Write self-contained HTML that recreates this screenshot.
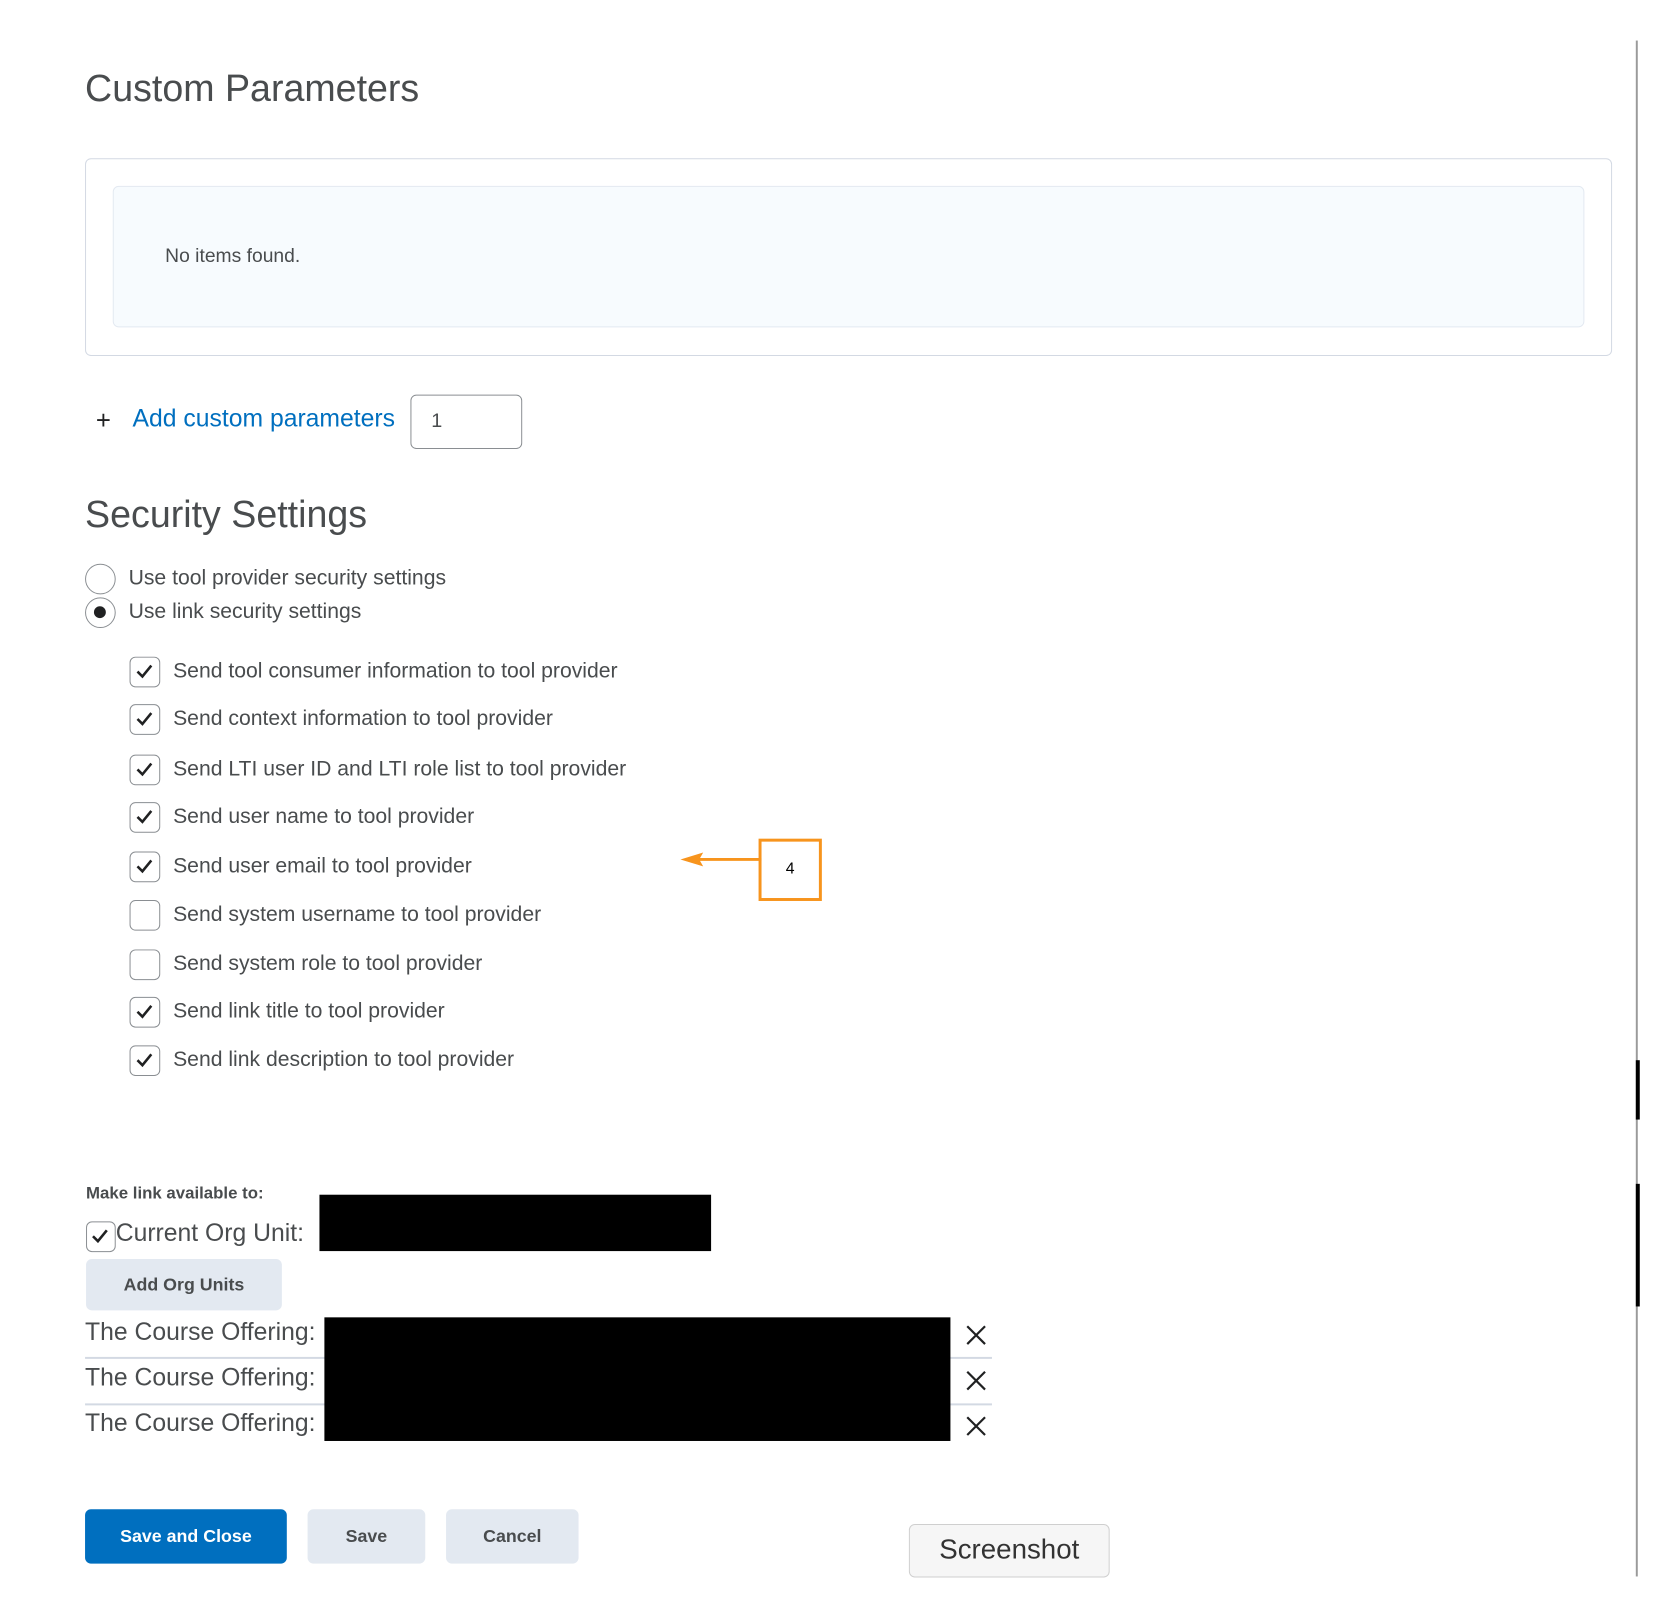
<!DOCTYPE html>
<html><head><meta charset="utf-8"><style>
*{box-sizing:border-box;margin:0;padding:0}
body{width:1680px;height:1618px;background:#fff;position:relative;overflow:hidden;font-family:"Liberation Sans",sans-serif;color:#494c4e}
#w{position:absolute;left:0;top:0;width:1680px;height:1618px;transform:scale(0.989);transform-origin:0 0}
.a{position:absolute;white-space:nowrap}
.cb{position:absolute;width:31px;height:31px;border:1.5px solid #8a8e92;border-radius:6px;background:#fff}
.cb svg{position:absolute;left:5px;top:6px}
.lbl{position:absolute;font-size:21.4px;color:#494c4e;white-space:nowrap}
.btn{position:absolute;border-radius:6px;background:#e3e9f1;font-size:18px;font-weight:bold;color:#494c4e;display:flex;align-items:center;justify-content:center}
</style></head><body><div id="w">
<div class="a" style="left:86px;top:69px;font-size:38px;color:#494c4e">Custom Parameters</div>
<div class="a" style="left:86px;top:160px;width:1544px;height:200px;border:1.5px solid #d3d9e3;border-radius:6px"></div>
<div class="a" style="left:114px;top:188px;width:1488px;height:143px;border:1px solid #e3e9f1;border-radius:6px;background:#f7fbfe"></div>
<div class="a" style="left:167px;top:248px;font-size:19.5px">No items found.</div>
<div class="a" style="left:97px;top:410px;font-size:26px;color:#202122">+</div>
<div class="a" style="left:134px;top:409px;font-size:25px;color:#006fbf">Add custom parameters</div>
<div class="a" style="left:415px;top:399px;width:113px;height:55px;border:1.5px solid #8a8e92;border-radius:6px;font-size:20px;padding:15px 0 0 20px">1</div>
<div class="a" style="left:86px;top:500px;font-size:38px">Security Settings</div>
<div class="a" style="left:86px;top:570px;width:31px;height:31px;border:1.5px solid #8a8e92;border-radius:50%"></div>
<div class="a" style="left:86px;top:604px;width:31px;height:31px;border:1.5px solid #8a8e92;border-radius:50%"><div style="position:absolute;left:8px;top:8px;width:12px;height:12px;border-radius:50%;background:#202122"></div></div>
<div class="lbl" style="left:130px;top:572px">Use tool provider security settings</div>
<div class="lbl" style="left:130px;top:606px">Use link security settings</div>

<div class="cb" style="left:131px;top:664px"><svg width="18" height="16"><path d="M2 8l5 5L16 2" stroke="#202122" stroke-width="2.6" fill="none"/></svg></div>
<div class="lbl" style="left:175px;top:666px">Send tool consumer information to tool provider</div>
<div class="cb" style="left:131px;top:712px"><svg width="18" height="16"><path d="M2 8l5 5L16 2" stroke="#202122" stroke-width="2.6" fill="none"/></svg></div>
<div class="lbl" style="left:175px;top:714px">Send context information to tool provider</div>
<div class="cb" style="left:131px;top:763px"><svg width="18" height="16"><path d="M2 8l5 5L16 2" stroke="#202122" stroke-width="2.6" fill="none"/></svg></div>
<div class="lbl" style="left:175px;top:765px">Send LTI user ID and LTI role list to tool provider</div>
<div class="cb" style="left:131px;top:811px"><svg width="18" height="16"><path d="M2 8l5 5L16 2" stroke="#202122" stroke-width="2.6" fill="none"/></svg></div>
<div class="lbl" style="left:175px;top:813px">Send user name to tool provider</div>
<div class="cb" style="left:131px;top:861px"><svg width="18" height="16"><path d="M2 8l5 5L16 2" stroke="#202122" stroke-width="2.6" fill="none"/></svg></div>
<div class="lbl" style="left:175px;top:863px">Send user email to tool provider</div>
<div class="cb" style="left:131px;top:910px"></div>
<div class="lbl" style="left:175px;top:912px">Send system username to tool provider</div>
<div class="cb" style="left:131px;top:960px"></div>
<div class="lbl" style="left:175px;top:962px">Send system role to tool provider</div>
<div class="cb" style="left:131px;top:1008px"><svg width="18" height="16"><path d="M2 8l5 5L16 2" stroke="#202122" stroke-width="2.6" fill="none"/></svg></div>
<div class="lbl" style="left:175px;top:1010px">Send link title to tool provider</div>
<div class="cb" style="left:131px;top:1057px"><svg width="18" height="16"><path d="M2 8l5 5L16 2" stroke="#202122" stroke-width="2.6" fill="none"/></svg></div>
<div class="lbl" style="left:175px;top:1059px">Send link description to tool provider</div>

<svg class="a" style="left:685px;top:855px" width="90" height="30"><path d="M18 14H85" stroke="#f7941d" stroke-width="3"/><path d="M3 14L26 7L22 14L26 21Z" fill="#f7941d"/></svg>
<div class="a" style="left:767px;top:848px;width:64px;height:63px;border:3.5px solid #f7941d;font-size:16px;color:#000;text-align:center;line-height:56px">4</div>

<div class="a" style="left:87px;top:1197px;font-size:17px;font-weight:bold;color:#494c4e">Make link available to:</div>
<div class="a" style="left:323px;top:1208px;width:396px;height:57px;background:#000"></div>
<div class="cb" style="left:87px;top:1235px;width:30px;height:31px"><svg width="18" height="16" style="left:4px"><path d="M2 8l5 5L16 2" stroke="#202122" stroke-width="2.6" fill="none"/></svg></div>
<div class="a" style="left:117px;top:1233px;font-size:25px">Current Org Unit:</div>
<div class="btn" style="left:87px;top:1273px;width:198px;height:52px">Add Org Units</div>
<div class="a" style="left:86px;top:1372px;width:917px;height:1.5px;background:#d3d9e3"></div>
<div class="a" style="left:86px;top:1419px;width:917px;height:1.5px;background:#d3d9e3"></div>
<div class="a" style="left:86px;top:1333px;font-size:25px">The Course Offering:</div>
<div class="a" style="left:86px;top:1379px;font-size:25px">The Course Offering:</div>
<div class="a" style="left:86px;top:1425px;font-size:25px">The Course Offering:</div>
<div class="a" style="left:328px;top:1332px;width:633px;height:125px;background:#000"></div>
<svg class="a" style="left:976px;top:1339px" width="22" height="22"><path d="M2 2L20 20M20 2L2 20" stroke="#202122" stroke-width="2.2"/></svg>
<svg class="a" style="left:976px;top:1385px" width="22" height="22"><path d="M2 2L20 20M20 2L2 20" stroke="#202122" stroke-width="2.2"/></svg>
<svg class="a" style="left:976px;top:1431px" width="22" height="22"><path d="M2 2L20 20M20 2L2 20" stroke="#202122" stroke-width="2.2"/></svg>

<div class="btn" style="left:86px;top:1526px;width:204px;height:55px;background:#006fbf;color:#fff">Save and Close</div>
<div class="btn" style="left:311px;top:1526px;width:119px;height:55px">Save</div>
<div class="btn" style="left:451px;top:1526px;width:134px;height:55px">Cancel</div>
<div class="a" style="left:919px;top:1541px;width:203px;height:54px;border:1.5px solid #cfcfcf;border-radius:6px;background:#f6f6f6;font-size:28px;color:#333;text-align:center;line-height:50px">Screenshot</div>

<div class="a" style="left:1654px;top:41px;width:2px;height:1553px;background:#9a9a9a"></div>
<div class="a" style="left:1654px;top:1072px;width:4px;height:60px;background:#000"></div>
<div class="a" style="left:1654px;top:1197px;width:4px;height:124px;background:#000"></div>
</div></body></html>
